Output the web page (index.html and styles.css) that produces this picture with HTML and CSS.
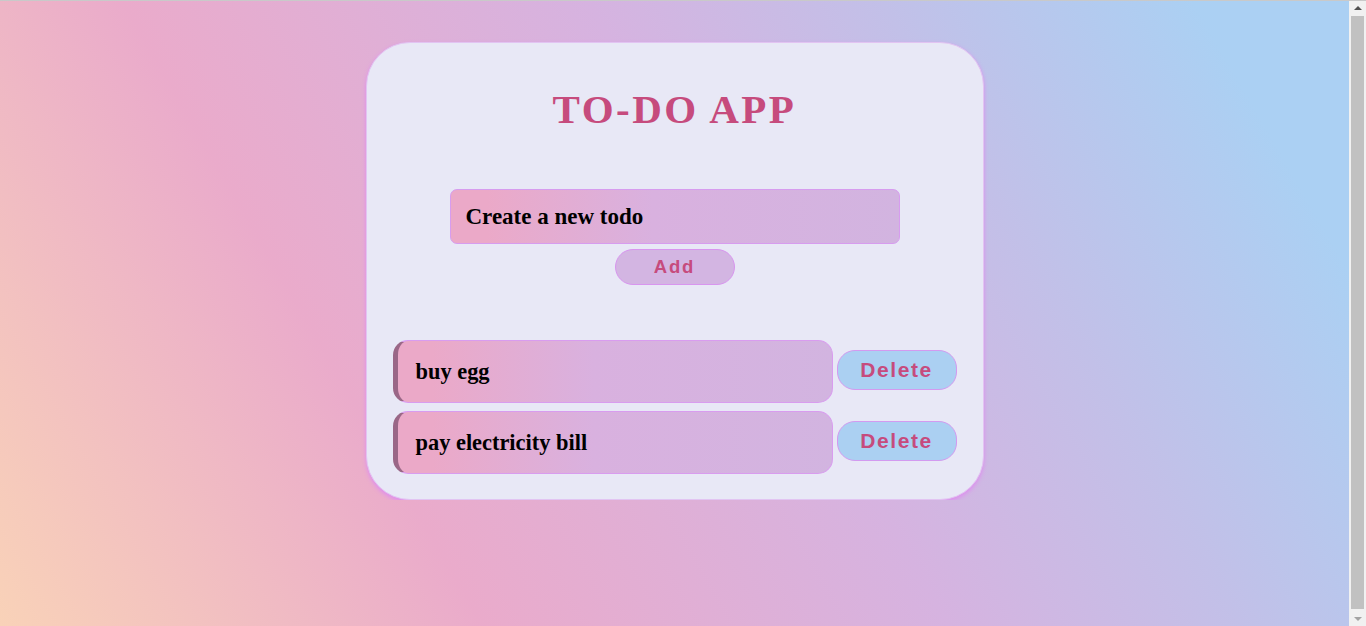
FILE: index.html
```html
<!DOCTYPE html>
<html lang="en">
<head>
<meta charset="utf-8">
<title>To-Do App</title>
<link rel="stylesheet" href="styles.css">
</head>
<body>
<main class="card">
  <h1 class="title">TO-DO APP</h1>
  <form class="new-todo" onsubmit="return false">
    <input class="todo-input" type="text" placeholder="Create a new todo">
    <button class="add-btn" type="submit">Add</button>
  </form>
  <ul class="todo-list">
    <li class="todo-row">
      <div class="todo-item">buy egg</div>
      <button class="delete-btn" type="button">Delete</button>
    </li>
    <li class="todo-row">
      <div class="todo-item">pay electricity bill</div>
      <button class="delete-btn" type="button">Delete</button>
    </li>
  </ul>
</main>
<div class="scrollbar" aria-hidden="true">
  <span class="arrow arrow-up"></span>
  <span class="thumb"></span>
  <span class="arrow arrow-down"></span>
</div>
</body>
</html>
```
FILE: styles.css
```css
html {
  background: linear-gradient(60deg, #f9d2b8 0%, #eaabcb 28%, #d6b3e0 55%, #c2c0e8 72%, #abd0f3 90%, #abd0f3 100%);
  min-height: 100%;
  border-top: 1px solid #c9c9c9;
}

body {
  margin: 8px 25px 8px 8px;
  font-family: "Liberation Serif", "Times New Roman", serif;
  display: flex;
  flex-direction: column;
  align-items: center;
}

.card {
  box-sizing: border-box;
  width: 618px;
  margin-top: 33px;
  padding: 42px 26px 25px;
  background: #e8e8f6;
  border-radius: 44px;
  border: 1px solid #e2c4f2;
  box-shadow: 0 2px 4px #df8cf0;
  display: flex;
  flex-direction: column;
  align-items: center;
}

.title {
  margin: 0;
  font-size: 41px;
  line-height: 48px;
  font-weight: bold;
  letter-spacing: 2.5px;
  color: #c64b7d;
}

.new-todo {
  margin-top: 56px;
  display: flex;
  flex-direction: column;
  align-items: center;
  gap: 5px;
}

.todo-input {
  box-sizing: border-box;
  width: 450px;
  height: 55px;
  padding: 0 15px;
  border: 1px solid #d79cef;
  border-radius: 7px;
  background: linear-gradient(90deg, #eba9c8 8%, #d9b1df 45%, #d2b4e0 100%);
  font-family: "Liberation Serif", "Times New Roman", serif;
  font-size: 23px;
  font-weight: bold;
  color: #000;
  outline: none;
}

.todo-input::placeholder {
  color: #000;
  opacity: 1;
}

.add-btn {
  box-sizing: border-box;
  width: 120px;
  height: 36px;
  border: 1px solid #d895ef;
  border-radius: 18px;
  background: #d3b5e2;
  font-family: "Liberation Sans", Arial, sans-serif;
  font-size: 18.5px;
  font-weight: bold;
  letter-spacing: 1.8px;
  color: #c64b7d;
  padding: 0;
}

.todo-list {
  list-style: none;
  margin: 55px 0 0;
  padding: 0;
  display: flex;
  flex-direction: column;
  gap: 8px;
  align-self: stretch;
}

.todo-row {
  display: flex;
  align-items: center;
  gap: 4px;
}

.todo-item {
  box-sizing: border-box;
  width: 440px;
  height: 63px;
  display: flex;
  align-items: center;
  padding-left: 18px;
  border: 1px solid #d99cef;
  border-left: 5px solid #9a6787;
  border-radius: 15px;
  background: linear-gradient(90deg, #eba9c8 8%, #d9b1df 45%, #d2b4e0 100%);
  font-size: 22.4px;
  font-weight: bold;
  color: #000;
}

.delete-btn {
  box-sizing: border-box;
  width: 120px;
  height: 40px;
  margin-top: -3px;
  border: 1px solid #d39af0;
  border-radius: 18px;
  background: #abd0f2;
  font-family: "Liberation Sans", Arial, sans-serif;
  font-size: 21px;
  font-weight: bold;
  letter-spacing: 1.6px;
  color: #c64b7d;
  padding: 0;
}

.scrollbar {
  position: fixed;
  top: 1px;
  right: 0;
  bottom: 0;
  width: 17px;
  background: #f1f1f1;
  display: flex;
  flex-direction: column;
  align-items: center;
}

.arrow {
  width: 0;
  height: 0;
  border-left: 4px solid transparent;
  border-right: 4px solid transparent;
}

.arrow-up {
  margin-top: 5px;
  border-bottom: 4px solid #505050;
}

.arrow-down {
  margin-bottom: 5px;
  border-top: 4px solid #a3a3a3;
}

.thumb {
  flex: 1;
  width: 13px;
  margin: 6px 0 8px;
  background: #c1c1c1;
}
```
